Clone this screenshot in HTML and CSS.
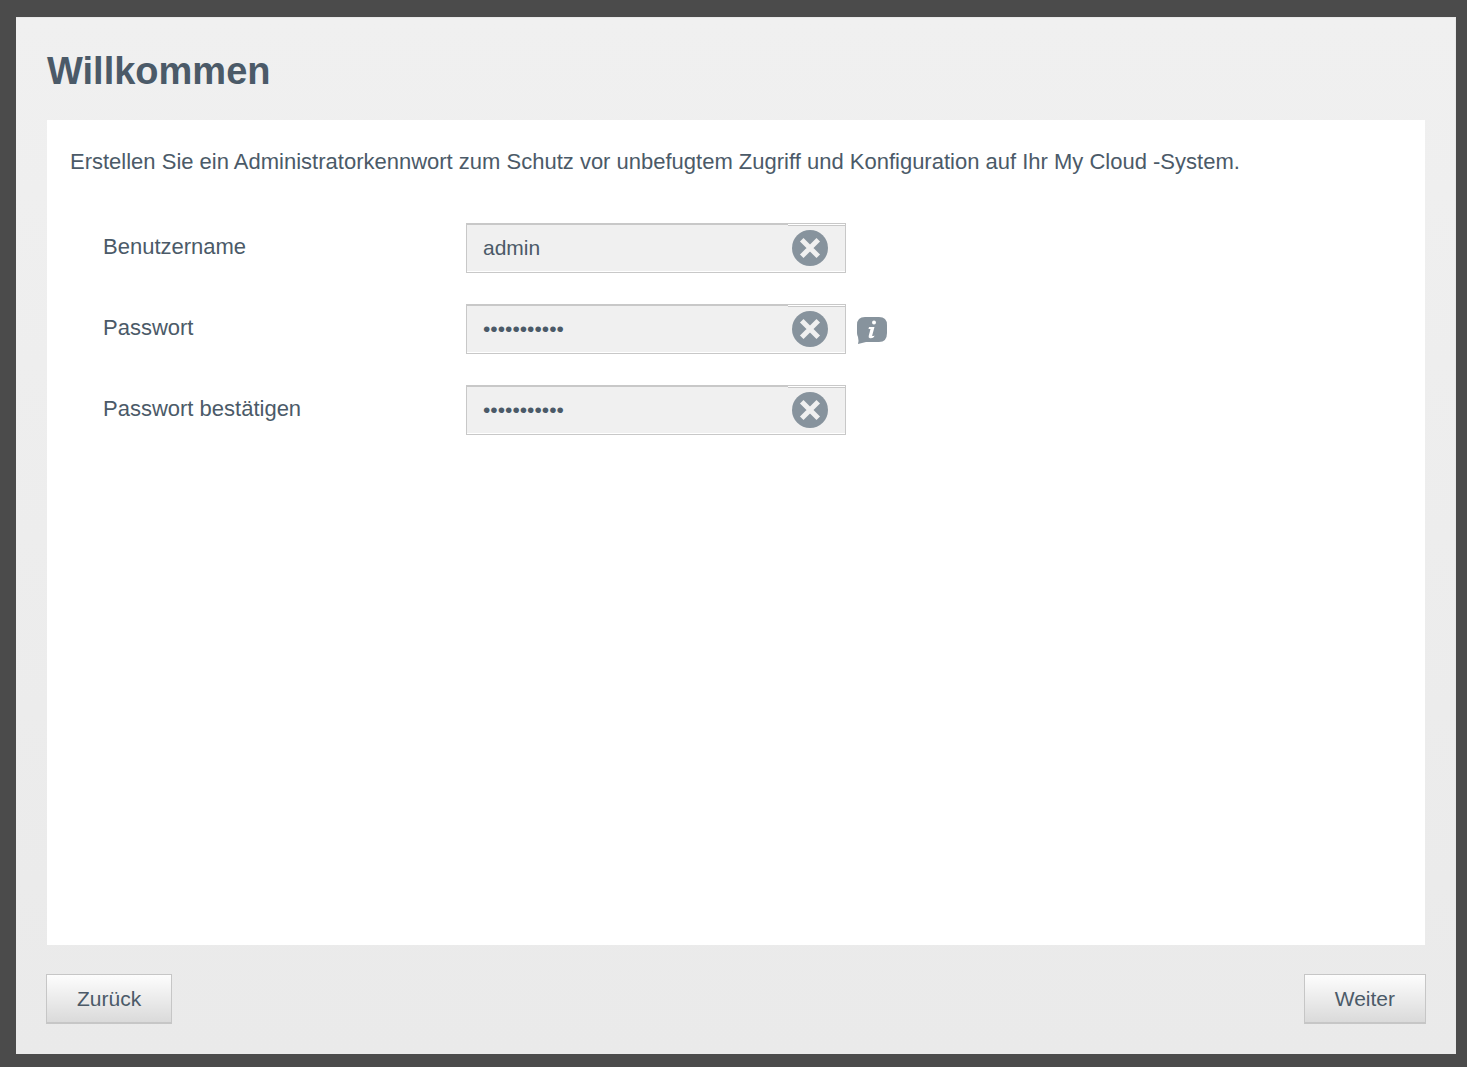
FILE: index.html
```html
<!DOCTYPE html>
<html lang="de">
<head>
<meta charset="utf-8">
<title>Willkommen</title>
<link rel="stylesheet" href="styles.css">
</head>
<body>
<svg class="sprite" aria-hidden="true">
  <symbol id="clear" viewBox="0 0 36 36">
    <circle cx="18" cy="18" r="18" fill="#87939d"/>
    <path d="M11.500 11.500 24.500 24.500M24.500 11.500 11.500 24.500" stroke="#f0f0f0" stroke-width="5" stroke-linecap="square"/>
  </symbol>
</svg>
<form class="dialog">
  <h1 class="title">Willkommen</h1>
  <main class="content">
    <p class="intro">Erstellen Sie ein Administratorkennwort zum Schutz vor unbefugtem Zugriff und Konfiguration auf Ihr My Cloud -System.</p>
    <div class="fields">
      <div class="row">
        <label class="label" for="user">Benutzername</label>
        <div class="field">
          <input class="input" id="user" type="text" value="admin">
          <button class="clear" type="button" aria-label="Benutzername löschen"><svg class="clear-icon"><use href="#clear"/></svg></button>
        </div>
      </div>
      <div class="row">
        <label class="label" for="pass">Passwort</label>
        <div class="field">
          <input class="input" id="pass" type="password" value="abcdefghijk">
          <button class="clear" type="button" aria-label="Passwort löschen"><svg class="clear-icon"><use href="#clear"/></svg></button>
        </div>
        <button class="info" type="button" aria-label="Information">
          <svg class="info-icon" viewBox="0 0 30 28">
            <path d="M8 0H22Q30 0 30 8V16Q30 25 22 25H9Q5 26 1 27Q2 24 1 20Q0 18 0 16V8Q0 0 8 0Z" fill="#87939d"/>
            <circle cx="17" cy="5.500" r="2" fill="#fff"/>
            <path d="M12 10H17.500L15.200 18.500Q15 19.500 17.500 18.500L17 20Q15 21.500 13 21.200Q11.200 21 11.700 19L13.500 12H11.500Z" fill="#fff"/>
          </svg>
        </button>
      </div>
      <div class="row">
        <label class="label" for="confirm">Passwort bestätigen</label>
        <div class="field">
          <input class="input" id="confirm" type="password" value="abcdefghijk">
          <button class="clear" type="button" aria-label="Bestätigung löschen"><svg class="clear-icon"><use href="#clear"/></svg></button>
        </div>
      </div>
    </div>
  </main>
  <footer class="actions">
    <button class="button" type="button">Zurück</button>
    <button class="button" type="submit">Weiter</button>
  </footer>
</form>
</body>
</html>
```
FILE: styles.css
```css
* {
  box-sizing: border-box;
}

body {
  display: flex;
  min-height: 100vh;
  margin: 0;
  padding: 17px 11px 13px 16px;
  background: #4b4b4b;
  color: #4b5a68;
  font-family: "Liberation Sans", Arial, sans-serif;
  font-size: 22px;
  line-height: 28px;
}

.sprite {
  position: absolute;
  width: 0;
  height: 0;
}

.dialog {
  display: flex;
  flex: 1;
  flex-direction: column;
  padding: 30px;
  border: 1px solid #e8e8e8;
  border-width: 1px 1px 0 0;
  background: linear-gradient(#f0f0f0, #eaeaea);
}

.title {
  margin: 0 0 26px 1px;
  font-size: 38px;
  line-height: 46px;
}

.content {
  flex: 1;
  margin-left: 1px;
  padding: 28px 23px;
  background: #fff;
}

.intro {
  margin: 0;
}

.fields {
  display: flex;
  flex-direction: column;
  gap: 31px;
  padding: 47px 33px;
}

.row {
  display: flex;
  align-items: center;
}

.label {
  width: 363px;
  padding-bottom: 2px;
}

.field {
  display: flex;
  width: 380px;
  height: 50px;
  border: 1px solid #c8c8c8;
  background: #fff;
}

.input {
  flex: 1;
  min-width: 0;
  margin-bottom: 1px;
  padding: 0 16px;
  border: 0;
  border-top: 1px solid #c8c8c8;
  border-radius: 0;
  outline: 0;
  background: #f0f0f0;
  color: inherit;
  font: inherit;
  font-size: 21px;
}

.clear {
  display: flex;
  align-items: center;
  width: 57px;
  margin: 1px 0;
  padding: 0 4px 2px;
  border: 0;
  border-top: 1px solid #c8c8c8;
  background: #f0f0f0;
}

.clear-icon {
  width: 36px;
  height: 36px;
}

.info {
  display: flex;
  margin-left: 11px;
  padding: 4px 0 0;
  border: 0;
  background: none;
}

.info-icon {
  width: 30px;
  height: 28px;
}

.actions {
  display: flex;
  justify-content: space-between;
  padding-top: 29px;
  margin-right: -1px;
}

.button {
  height: 50px;
  padding: 0 30px;
  border: 1px solid #c6c6c6;
  border-bottom-width: 2px;
  background: linear-gradient(#fdfdfd, #dadada);
  color: inherit;
  font: inherit;
  font-size: 21px;
}
```
